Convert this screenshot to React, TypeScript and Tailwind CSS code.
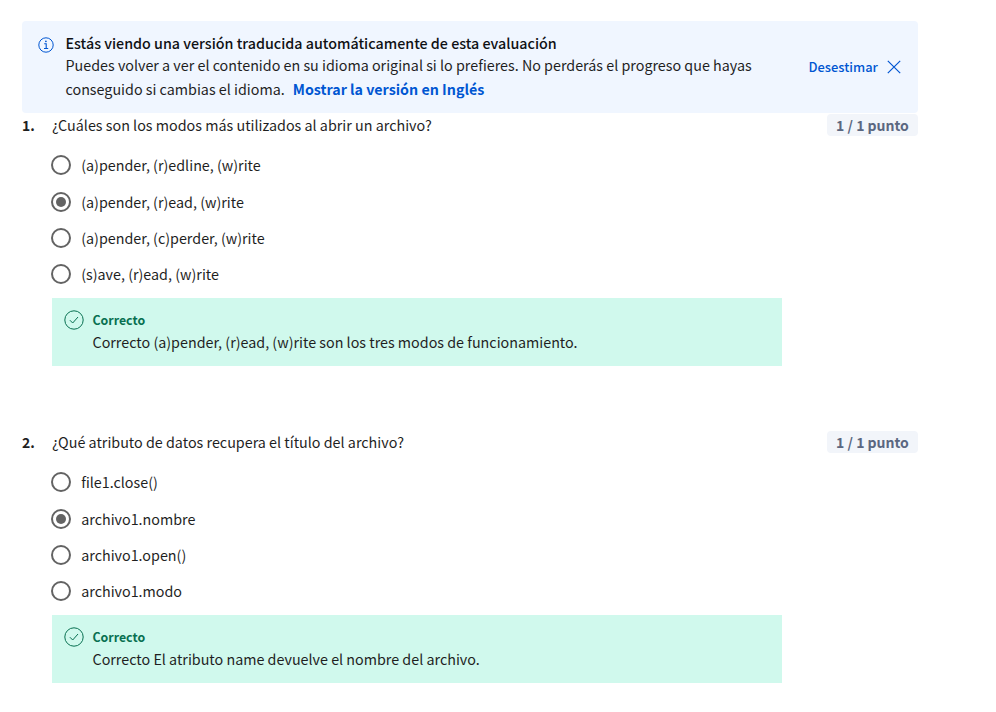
import React from "react";

type Question = {
  number: string;
  prompt: string;
  options: { label: string; className: string }[];
  selected: number;
  feedback: string;
};

const questions: Question[] = [
  {
    number: "1.",
    prompt: "¿Cuáles son los modos más utilizados al abrir un archivo?",
    options: [
      { label: "(a)pender, (r)edline, (w)rite", className: "h-[37px]" },
      { label: "(a)pender, (r)ead, (w)rite", className: "h-[36px]" },
      { label: "(a)pender, (c)perder, (w)rite", className: "h-[36px]" },
      { label: "(s)ave, (r)ead, (w)rite", className: "h-[24px]" },
    ],
    selected: 1,
    feedback: "Correcto (a)pender, (r)ead, (w)rite son los tres modos de funcionamiento.",
  },
  {
    number: "2.",
    prompt: "¿Qué atributo de datos recupera el título del archivo?",
    options: [
      { label: "file1.close()", className: "h-[37px]" },
      { label: "archivo1.nombre", className: "h-[36px]" },
      { label: "archivo1.open()", className: "h-[36px]" },
      { label: "archivo1.modo", className: "h-[24px]" },
    ],
    selected: 1,
    feedback: "Correcto El atributo name devuelve el nombre del archivo.",
  },
];

function InfoIcon() {
  return (
    <svg className="size-4 shrink-0" viewBox="0 0 16 16" fill="none" stroke="#0056d2">
      <circle cx="8" cy="8" r="7.2" strokeWidth="1" />
      <path d="M6.2 6.7H8.2V11.4M6 11.5H10.2" strokeWidth="1.1" />
      <circle cx="7.9" cy="4.3" r="0.9" fill="#0056d2" stroke="none" />
    </svg>
  );
}

function CheckIcon() {
  return (
    <svg className="size-5 shrink-0" viewBox="0 0 20 20" fill="none" stroke="#087051">
      <circle cx="10" cy="10" r="9.2" strokeWidth="1" />
      <path d="M5.9 10.2L8.7 13L14 7" strokeWidth="1" />
    </svg>
  );
}

function Radio({ checked }: { checked: boolean }) {
  return (
    <span className="flex size-5 shrink-0 items-center justify-center rounded-full border-2 border-[#636363] bg-white">
      {checked && <span className="size-[10px] rounded-full bg-[#636363]" />}
    </span>
  );
}

function QuestionBlock({ q }: { q: Question }) {
  return (
    <section className="h-[317px]">
      <div className="flex h-[25px] items-start">
        <span className="w-[30px] text-[14px] leading-[25px] font-bold">{q.number}</span>
        <span className="grow text-[14.34px] leading-[24px]">{q.prompt}</span>
        <span className="mt-[1px] flex h-[22px] w-[91px] items-center justify-center rounded-[4px] bg-[#f2f5fa] text-[14px] font-bold text-[#5b6780]">
          1 / 1 punto
        </span>
      </div>
      <div className="mt-[17px] pl-[29px]">
        {q.options.map((o, i) => (
          <div key={o.label} className={`flex items-start gap-[10px] ${o.className}`}>
            <Radio checked={i === q.selected} />
            <span className="pl-[0.2px] text-[14.32px] leading-[20px]">{o.label}</span>
          </div>
        ))}
      </div>
      <div className="mt-[10px] ml-[30px] flex h-[68px] w-[730px] gap-[9px] bg-[#d0f9ed] pt-[12px] pl-[12px]">
        <CheckIcon />
        <div className="-ml-[0.5px]">
          <div className="text-[12.35px] leading-[20px] font-bold text-[#087051]">Correcto</div>
          <div className="text-[14.32px] leading-[24px]">{q.feedback}</div>
        </div>
      </div>
    </section>
  );
}

export default function App() {
  return (
    <main
      className="h-[712px] w-[996px] overflow-hidden bg-white pt-[21px] pl-[22px] text-[#1f1f1f]"
      style={{ fontFamily: '"Noto Sans CJK SC", sans-serif' }}
    >
      <div className="w-[896px]">
        <div className="flex h-[92px] rounded-[4px] bg-[#f0f6ff] pl-4">
          <div className="pt-[16px]">
            <InfoIcon />
          </div>
          <div className="w-[742px] shrink-0 pt-[10px] pl-[11.5px] text-[14.32px] whitespace-nowrap">
            <div className="text-[14.29px] leading-[23px] font-medium text-[#0f1114]">
              Estás viendo una versión traducida automáticamente de esta evaluación
            </div>
            <div className="leading-[22px]">
              Puedes volver a ver el contenido en su idioma original si lo prefieres. No perderás el progreso que hayas
            </div>
            <div className="flex pt-px leading-[24px]">
              <span>conseguido si cambias el idioma.</span>
              <span className="ml-2 text-[14.25px] font-bold text-[#0056d2]">Mostrar la versión en Inglés</span>
            </div>
          </div>
          <div className="flex items-center text-[12.9px] font-medium text-[#0056d2]">
            <span className="w-[91px] pl-[12.5px]">Desestimar</span>
            <svg className="size-[14px] shrink-0" viewBox="0 0 14 14" stroke="#0056d2" strokeWidth="1.2">
              <path d="M0.8 0.8L13.2 13.2M13.2 0.8L0.8 13.2" />
            </svg>
          </div>
        </div>
        {questions.map((q) => (
          <QuestionBlock key={q.number} q={q} />
        ))}
      </div>
    </main>
  );
}
